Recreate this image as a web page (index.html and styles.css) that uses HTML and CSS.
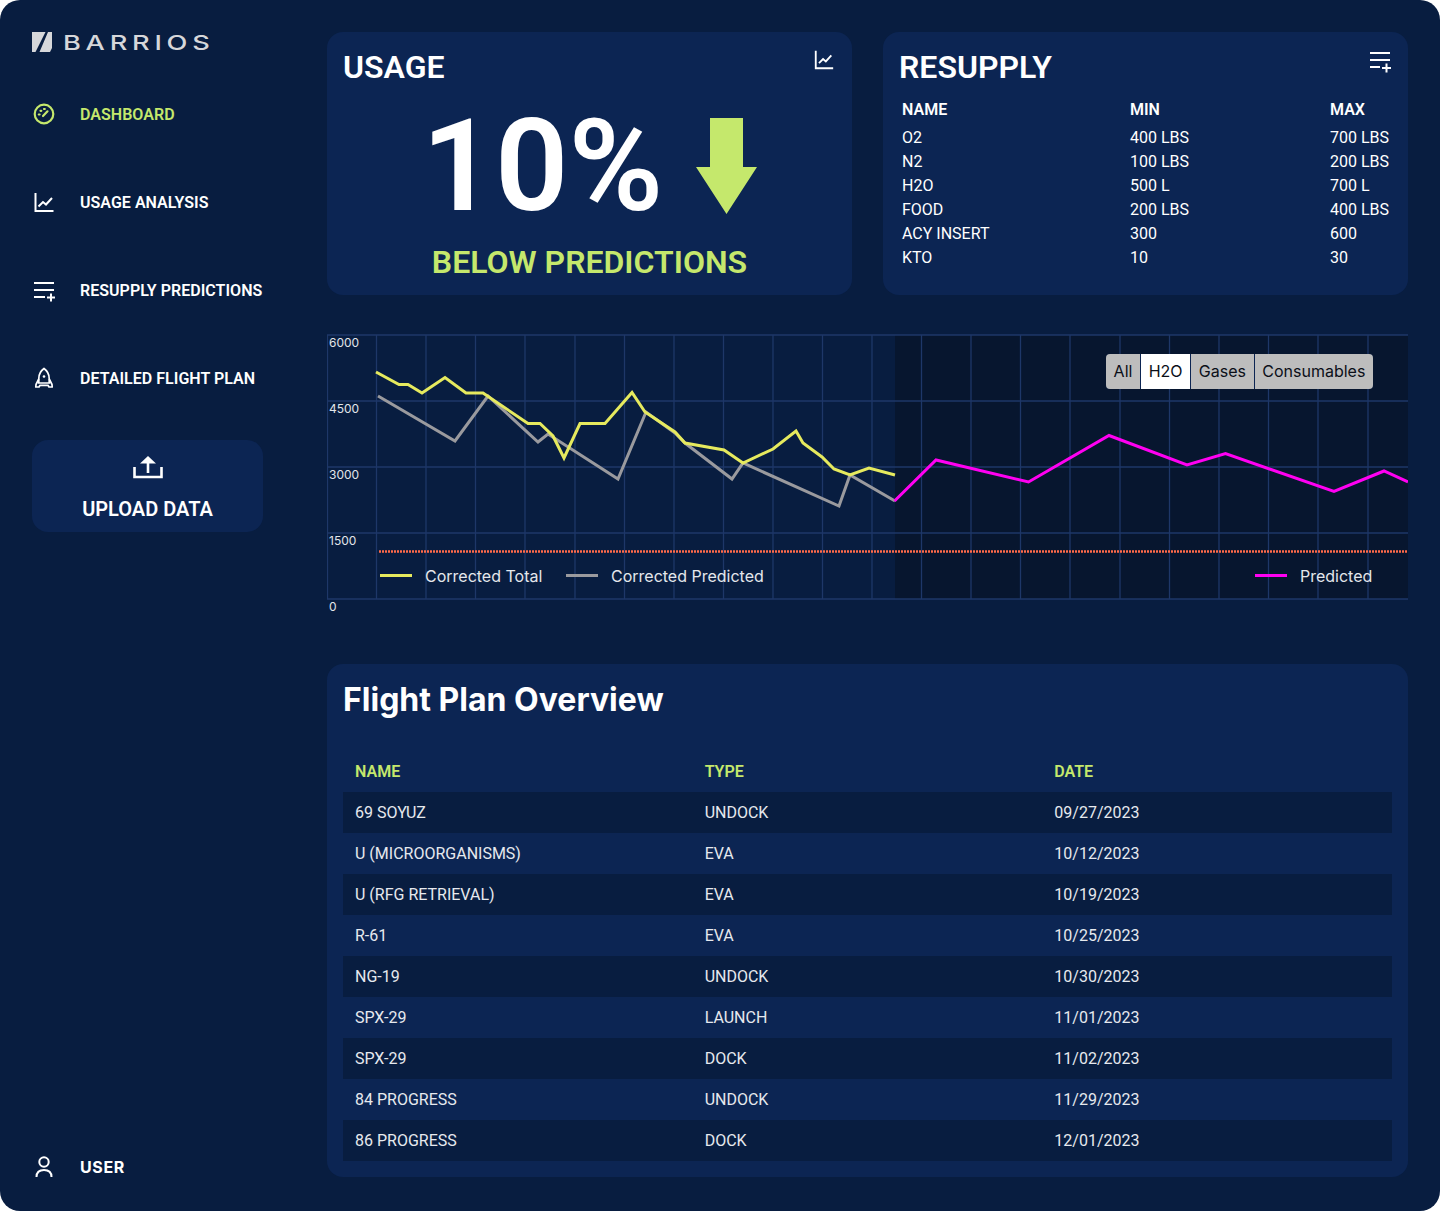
FILE: index.html
```html
<!DOCTYPE html>
<html lang="en">
<head>
<meta charset="utf-8">
<title>Barrios Dashboard</title>
<link rel="stylesheet" href="styles.css">
</head>
<body>
<div class="app">
  <aside class="sidebar">
    <div class="logo">
      <svg class="logo-mark" viewBox="0 0 20 20" width="20" height="20"><path d="M0 0H13.500L3.500 20H0Z M16 0H20V16L18 20H7.500Z" fill="#d6d7da"/></svg>
      <span class="logo-text">BARRIOS</span>
    </div>
    <nav class="nav">
      <a class="nav-item active">
        <svg class="icon" viewBox="0 0 24 24" fill="none" stroke="currentColor" stroke-width="2.200"><circle cx="12" cy="12" r="9.300"/><path d="M11 14 15.500 9.300" stroke-linecap="round"/><path d="M6.800 12.500h.8M8.500 8.800h.8M12 7h.8" stroke-linecap="round"/></svg>
        <span>DASHBOARD</span>
      </a>
      <a class="nav-item">
        <svg class="icon" viewBox="0 0 24 24" fill="none" stroke="currentColor" stroke-width="2"><path d="M3.500 3v18h18"/><path d="M6.500 16.500 11 12l3 2.500 6-6.500" stroke-width="2"/></svg>
        <span>USAGE ANALYSIS</span>
      </a>
      <a class="nav-item">
        <svg class="icon" viewBox="0 0 24 24" fill="none" stroke="currentColor" stroke-width="2"><path d="M2 5h20M2 12h20M2 19h11M15 19.500h8M19 15.500v8"/></svg>
        <span>RESUPPLY PREDICTIONS</span>
      </a>
      <a class="nav-item">
        <svg class="icon" viewBox="0 0 24 24" fill="none" stroke="currentColor" stroke-width="1.700"><path d="M12 2.500c-3.500 2.500-5.200 6-5.200 10v4.500h10.400v-4.500c0-4-1.700-7.500-5.200-10Z"/><path d="M6.800 13 4 18.500l-.2 2.500h3.200L8 19.300h8l1 1.700h3.200l-.2-2.500L17.200 13" stroke-linejoin="round"/><circle cx="12" cy="10.500" r="1.300" fill="currentColor" stroke="none"/></svg>
        <span>DETAILED FLIGHT PLAN</span>
      </a>
    </nav>
    <button class="upload">
      <svg class="upload-icon" viewBox="0 0 30 24" width="30" height="24" fill="none" stroke="#fff" stroke-width="2.600"><path d="M1.500 12v10h27V12"/><path d="M15 18V4"/><path d="M7 8.500 15 1l8 7.500Z" fill="#fff" stroke="none"/></svg>
      <span>UPLOAD DATA</span>
    </button>
    <div class="user">
      <svg class="icon" viewBox="0 0 24 24" fill="none" stroke="currentColor" stroke-width="2"><circle cx="12" cy="7" r="4.700"/><path d="M4.500 22c0-4.500 3-7 7.500-7s7.500 2.500 7.500 7"/></svg>
      <span>USER</span>
    </div>
  </aside>

  <main class="main">
    <section class="top-row">
      <div class="card usage">
        <h2 class="card-title">USAGE</h2>
        <svg class="card-icon" viewBox="0 0 24 24" width="22" height="22" fill="none" stroke="#fff" stroke-width="2"><path d="M3 2v19h19"/><path d="M6.500 15.500 11 11l3 2.500 6-6.500" stroke-width="2"/></svg>
        <div class="usage-value">
          <span class="percent">10%</span>
          <svg class="arrow" viewBox="0 0 61 96" width="61" height="96"><path d="M14 0H47V49H61L30.500 96 0 49H14Z" fill="#c5e86c"/></svg>
        </div>
        <p class="below">BELOW PREDICTIONS</p>
      </div>
      <div class="card resupply">
        <h2 class="card-title">RESUPPLY</h2>
        <svg class="card-icon list-icon" viewBox="0 0 24 24" width="24" height="24" fill="none" stroke="#fff" stroke-width="2"><path d="M2 4h20M2 11h20M2 18h10M14 19h9M18.500 14.500v9"/></svg>
        <table class="resupply-table">
          <thead><tr><th>NAME</th><th>MIN</th><th>MAX</th></tr></thead>
          <tbody>
            <tr><td>O2</td><td>400 LBS</td><td>700 LBS</td></tr>
            <tr><td>N2</td><td>100 LBS</td><td>200 LBS</td></tr>
            <tr><td>H2O</td><td>500 L</td><td>700 L</td></tr>
            <tr><td>FOOD</td><td>200 LBS</td><td>400 LBS</td></tr>
            <tr><td>ACY INSERT</td><td>300</td><td>600</td></tr>
            <tr><td>KTO</td><td>10</td><td>30</td></tr>
          </tbody>
        </table>
      </div>
    </section>

    <section class="chart">
      <svg class="chart-svg" viewBox="327 327 1081 290" width="1081" height="290">
        <rect class="forecast" x="895" y="335" width="513" height="264"/>
        <g class="grid">
          <path d="M327 335H1408M327 401H1408M327 467H1408M327 533H1408M327 599H1408M327.500 335V599"/>
          <path d="M376.500 335V599M426 335V599M475.500 335V599M525 335V599M575 335V599M624.500 335V599M674 335V599M723.500 335V599M773 335V599M822.500 335V599M872 335V599M921.500 335V599M971 335V599M1020.500 335V599M1070 335V599M1120 335V599M1169.500 335V599M1219 335V599M1268.500 335V599M1318 335V599M1368 335V599"/>
        </g>
        <g class="axis">
          <text x="329" y="347">6000</text>
          <text x="329" y="413">4500</text>
          <text x="329" y="479">3000</text>
          <text x="329" y="545">1500</text>
          <text x="329" y="611">0</text>
        </g>
        <line class="limit" x1="379" y1="551.500" x2="1408" y2="551.500"/>
        <polyline class="line gray" points="378,396 455,441 488,396 538,442 548,434 618,479 646,412 675,433 685,443 732,479 743,463 839,506 850,475 895,501"/>
        <polyline class="line yellow" points="376,372 399,384.500 408,384.500 422,393 445,377.500 466,393 483,393 528,423.500 540,423.500 553,436 564,458 580,423.500 605,423.500 632,392.500 645,412 675,432 685,443 724,450 743,463 773,449 796,431 803,443 822,457 834,469 850,475 869,468 895,475"/>
        <polyline class="line magenta" points="894.500,501 936,460 1028.500,482 1109,435.500 1187,465 1225.500,453.500 1334,491.500 1384,471 1408,482"/>
        <g class="legend">
          <line class="swatch-y" x1="380" y1="575.500" x2="412" y2="575.500"/>
          <text x="425" y="582">Corrected Total</text>
          <line class="swatch-g" x1="566" y1="575.500" x2="598" y2="575.500"/>
          <text x="611" y="582">Corrected Predicted</text>
          <line class="swatch-m" x1="1255" y1="575.500" x2="1287" y2="575.500"/>
          <text x="1300" y="582">Predicted</text>
        </g>
      </svg>
      <div class="segments">
        <button class="seg">All</button><button class="seg on">H2O</button><button class="seg">Gases</button><button class="seg">Consumables</button>
      </div>
    </section>

    <section class="card flight">
      <h2 class="flight-title">Flight Plan Overview</h2>
      <table class="flight-table">
        <thead><tr><th>NAME</th><th>TYPE</th><th>DATE</th></tr></thead>
        <tbody>
          <tr><td>69 SOYUZ</td><td>UNDOCK</td><td>09/27/2023</td></tr>
          <tr><td>U (MICROORGANISMS)</td><td>EVA</td><td>10/12/2023</td></tr>
          <tr><td>U (RFG RETRIEVAL)</td><td>EVA</td><td>10/19/2023</td></tr>
          <tr><td>R-61</td><td>EVA</td><td>10/25/2023</td></tr>
          <tr><td>NG-19</td><td>UNDOCK</td><td>10/30/2023</td></tr>
          <tr><td>SPX-29</td><td>LAUNCH</td><td>11/01/2023</td></tr>
          <tr><td>SPX-29</td><td>DOCK</td><td>11/02/2023</td></tr>
          <tr><td>84 PROGRESS</td><td>UNDOCK</td><td>11/29/2023</td></tr>
          <tr><td>86 PROGRESS</td><td>DOCK</td><td>12/01/2023</td></tr>
        </tbody>
      </table>
    </section>
  </main>
</div>
</body>
</html>
```
FILE: styles.css
```css
* { box-sizing: border-box; }
html, body { margin: 0; padding: 0; background: #fff; }
body { font-family: Inter, "Liberation Sans", sans-serif; color: #fff; }
.app {
  width: 1440px; height: 1211px; background: #081d40; border-radius: 20px;
  display: grid; grid-template-columns: 327px 1fr; overflow: hidden;
}
.sidebar { display: flex; flex-direction: column; padding: 32px 0 0 32px; height: 100%; }
.logo { display: flex; align-items: center; height: 20px; }
.logo-mark { flex: none; }
.logo-text {
  margin-left: 11px; padding-top: 1px; font-family: Inter, sans-serif; font-size: 20px; font-weight: 500;
  letter-spacing: 3.500px; color: #d6d7da; transform: scaleX(1.36); transform-origin: left center; line-height: 20px;
}
.nav { display: flex; flex-direction: column; gap: 64px; margin-top: 50px; }
.nav-item { display: flex; align-items: center; height: 24px; gap: 24px; color: #fff;
  font-family: Roboto, sans-serif; font-weight: 600; font-size: 16px; letter-spacing: 0.03px; white-space: nowrap; }
.nav-item.active { color: #c5e86c; }
.icon { width: 24px; height: 24px; flex: none; }
.upload {
  margin-top: 50px; width: 231px; height: 92px; background: #0c2553; border: 0; border-radius: 16px;
  color: #fff; display: flex; flex-direction: column; align-items: center; padding: 15px 0 0;
  font-family: Roboto, sans-serif; font-weight: 600; font-size: 20px;
}
.upload-icon { display: block; margin-bottom: 18px; }
.upload span { line-height: 24px; }
.user { margin-top: auto; margin-bottom: 32px; display: flex; align-items: center; gap: 24px; height: 24px;
  font-weight: 700; font-size: 16px; letter-spacing: 0.6px; }

.main { padding: 32px 32px 0 0; min-width: 0; }
.top-row { display: grid; grid-template-columns: 525px 525px; column-gap: 31px; height: 263px; }
.card { background: #0c2553; border-radius: 16px; position: relative; }
.card-title { margin: 0; position: absolute; left: 16px; top: 15px; font-family: Roboto, sans-serif; font-weight: 600; font-size: 32px; line-height: 40px; }
.card-icon { position: absolute; top: 17px; right: 17px; }
.list-icon { right: 16px; }
.usage { display: flex; flex-direction: column; align-items: center; }
.usage-value { display: flex; align-items: center; margin-top: 79px; height: 110px; gap: 33px; }
.percent { font-family: Roboto, sans-serif; font-size: 128.500px; font-weight: 600; line-height: 110px; }
.arrow { flex: none; }
.below { margin: 21px 0 0; font-family: Roboto, sans-serif; font-weight: 600; font-size: 32px; line-height: 40px; color: #c5e86c; }
.resupply { padding: 65px 18px 0 19px; }
.resupply-table { width: 100%; border-collapse: collapse; table-layout: fixed; font-family: Roboto, sans-serif; font-size: 16px; white-space: nowrap; }
.resupply-table th { font-weight: 600; text-align: left; padding: 0 0 4px; height: 28px; font-size: 16px; }
.resupply-table td { padding: 0; height: 24px; }
.resupply-table th:nth-child(1) { width: 228px; }
.resupply-table th:nth-child(2) { width: 200px; }

.chart { position: relative; height: 369px; padding-top: 32px; }
.chart-svg { display: block; }
.forecast { fill: #07162f; }
.grid path { fill: none; stroke: #1e3768; stroke-width: 1.300; }
.axis text { fill: #e2e5ea; font-size: 12px; font-family: Inter, sans-serif; }
.limit { stroke: #ff6a4a; stroke-width: 2.500; stroke-dasharray: 2 1; }
.line { fill: none; stroke-width: 3; stroke-linejoin: miter; }
.yellow { stroke: #e6ea5e; }
.gray { stroke: #9a9a9e; }
.magenta { stroke: #ff00f2; }
.legend text { fill: #e4e7ec; font-size: 16px; font-family: Inter, sans-serif; }
.swatch-y { stroke: #e6ea5e; stroke-width: 3; }
.swatch-g { stroke: #9a9a9e; stroke-width: 3; }
.swatch-m { stroke: #ff00f2; stroke-width: 3; }
.segments { position: absolute; top: 59px; right: 35px; display: flex; height: 35px; border-radius: 4px; overflow: hidden; gap: 1px; background: #0c2553; }
.seg { border: 0; background: #bdbdbd; color: #0b0f18; font-family: Inter, sans-serif; font-size: 16px; padding: 0 7.650px 2px; height: 35px; }
.seg.on { background: #fff; }

.flight { height: 513px; padding: 16px; }
.flight-title { margin: 0; font-size: 32px; font-weight: 700; line-height: 40px; letter-spacing: 0; }
.flight-table { width: 1049px; margin-top: 32px; border-collapse: collapse; table-layout: fixed; font-family: Roboto, sans-serif; font-size: 16px; }
.flight-table th { height: 40px; padding: 0 12px 2px; text-align: left; font-weight: 600; font-size: 16px; color: #c5e86c; }
.flight-table td { height: 41px; padding: 0 12px; color: #e6e9ee; }
.flight-table tbody tr:nth-child(odd) { background: #081d40; }
```
